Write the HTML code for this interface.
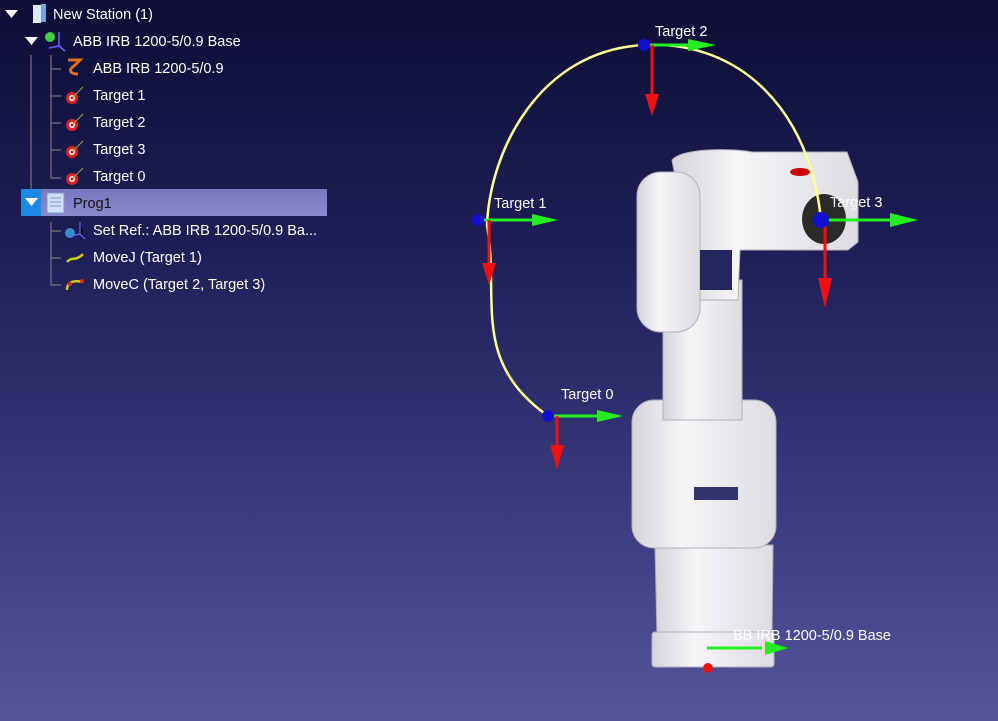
<!DOCTYPE html>
<html><head><style>
body{margin:0;width:998px;height:721px;overflow:hidden;background:linear-gradient(#0d0d35 0%,#1f1f58 35%,#3a3a7e 70%,#55559c 100%);font-family:"Liberation Sans",sans-serif;position:relative}
.r{position:absolute;color:#fff;font-size:14.5px;white-space:nowrap}
.sel{position:absolute;left:21px;top:189px;width:306px;height:27px;background:linear-gradient(#7878c0,#8a8ad0)}
.lbl{font-family:"Liberation Sans",sans-serif;font-size:14.5px;fill:#fff}
</style></head><body>
<div class="sel"></div>
<div style="position:absolute;left:21px;top:189px;width:20px;height:27px;background:#1e88e5"></div>
<svg width="340" height="300" style="position:absolute;left:0;top:0">
<g fill="#fff"><path d="M5 10h13l-6.5 8z"/><path d="M25 37h13l-6.5 8z"/><path d="M25 198h13l-6.5 8z"/></g>
<rect x="33" y="5" width="8" height="18" fill="#dfe8f5"/><rect x="41" y="4" width="5" height="18" fill="#6aa6e0"/>
<circle cx="50" cy="37" r="5" fill="#4c4"/><path d="M59 32v14M59 46l-10 2M59 46l6 5" stroke="#66f" stroke-width="1.5"/>
<g stroke="#888" fill="none"><path d="M31 55v134M51 55v123h10M51 69h10M51 96h10M51 123h10M51 150h10M51 222v63h10M51 231h10M51 258h10"/></g>
<path d="M68 60h12l-6 6c-6 4 -4 8 4 8" stroke="#e07020" stroke-width="3" fill="none"/>
<g>
<circle cx="72" cy="98" r="6" fill="#d22"/><circle cx="72" cy="98" r="3" fill="#fff"/><circle cx="72" cy="98" r="1.5" fill="#d22"/><path d="M73 97l10-10" stroke="#9a3"/>
<circle cx="72" cy="125" r="6" fill="#d22"/><circle cx="72" cy="125" r="3" fill="#fff"/><circle cx="72" cy="125" r="1.5" fill="#d22"/><path d="M73 124l10-10" stroke="#9a3"/>
<circle cx="72" cy="152" r="6" fill="#d22"/><circle cx="72" cy="152" r="3" fill="#fff"/><circle cx="72" cy="152" r="1.5" fill="#d22"/><path d="M73 151l10-10" stroke="#9a3"/>
<circle cx="72" cy="179" r="6" fill="#d22"/><circle cx="72" cy="179" r="3" fill="#fff"/><circle cx="72" cy="179" r="1.5" fill="#d22"/><path d="M73 178l10-10" stroke="#9a3"/>
</g>
<rect x="47" y="193" width="17" height="20" fill="#cfe0f5" stroke="#7a9cc8"/><path d="M50 198h11M50 202h11M50 206h11" stroke="#7a9cc8"/>
<circle cx="70" cy="233" r="5" fill="#3a8ad0"/><path d="M80 222v12l5 5M80 234l-10 2" stroke="#66f" stroke-width="1.3"/>
<path d="M67 262c5-6 8 0 16-8" stroke="#cc0" stroke-width="2.5" fill="none"/>
<path d="M67 290c0-8 6-10 16-8" stroke="#cc0" stroke-width="2.5" fill="none"/><circle cx="82" cy="281" r="2" fill="#d22"/><circle cx="70" cy="284" r="2" fill="#d22"/>
</svg>
<div class="r" style="left:53px;top:7px">New Station (1)</div>
<div class="r" style="left:73px;top:34px">ABB IRB 1200-5/0.9 Base</div>
<div class="r" style="left:93px;top:61px">ABB IRB 1200-5/0.9</div>
<div class="r" style="left:93px;top:88px">Target 1</div>
<div class="r" style="left:93px;top:115px">Target 2</div>
<div class="r" style="left:93px;top:142px">Target 3</div>
<div class="r" style="left:93px;top:169px">Target 0</div>
<div class="r" style="left:73px;top:196px;color:#111">Prog1</div>
<div class="r" style="left:93px;top:223px">Set Ref.: ABB IRB 1200-5/0.9 Ba...</div>
<div class="r" style="left:93px;top:250px">MoveJ (Target 1)</div>
<div class="r" style="left:93px;top:277px">MoveC (Target 2, Target 3)</div>
<svg width="998" height="721" style="position:absolute;left:0;top:0">
<defs>
<linearGradient id="g" x1="0" x2="1"><stop offset="0" stop-color="#d4d4da"/><stop offset=".35" stop-color="#f6f6f8"/><stop offset="1" stop-color="#dcdce2"/></linearGradient>
</defs>
<g fill="url(#g)" stroke="#b0b0ba" stroke-width="1">
<path d="M655 545h118l-1 92h-115z"/>
<rect x="652" y="632" width="122" height="35" rx="3"/>
<rect x="632" y="400" width="144" height="148" rx="22"/>
<rect x="663" y="280" width="79" height="140"/>
<path d="M672 160c10-12 60-12 80-8h95l11 30v60l-10 8h-108l-2 50h-40z"/>
<rect x="637" y="172" width="63" height="160" rx="24"/>
</g>
<rect x="700" y="250" width="32" height="40" fill="#252560"/>
<rect x="694" y="487" width="44" height="13" fill="#33336e"/>
<ellipse cx="824" cy="219" rx="22" ry="25" fill="#2a2a2a"/>
<ellipse cx="800" cy="172" rx="10" ry="4" fill="#c00"/>
<path d="M548 416C470 360 500 300 487 225C490 150 540 50 644 45C740 40 810 110 821 220" stroke="#ffff90" stroke-width="2.5" fill="none"/>
<g stroke-width="3">
<path d="M644 45h45M478 220h55M821 220h70M548 416h50M707 648h55" stroke="#2e2"/>
<path d="M652 45v50M489 220v45M825 220v60M557 416v30" stroke="#e11"/>
</g>
<g fill="#2e2"><path d="M688 39l28 6-28 6z"/><path d="M532 214l26 6-26 6z"/><path d="M890 213l28 7-28 7z"/><path d="M597 410l26 6-26 6z"/><path d="M765 641l23 7-23 7z"/></g>
<g fill="#e11"><path d="M645 94l7 22 7-22z"/><path d="M482 263l7 22 7-22z"/><path d="M818 278l7 30 7-30z"/><path d="M550 445l7 25 7-25z"/><circle cx="708" cy="668" r="5"/></g>
<g fill="#1010d0"><circle cx="644" cy="45" r="6"/><circle cx="478" cy="220" r="6"/><circle cx="821" cy="220" r="8"/><circle cx="548" cy="416" r="6"/></g>
<text class="lbl" x="655" y="36">Target 2</text>
<text class="lbl" x="494" y="208">Target 1</text>
<text class="lbl" x="830" y="207">Target 3</text>
<text class="lbl" x="561" y="399">Target 0</text>
<text class="lbl" x="733" y="640">BB IRB 1200-5/0.9 Base</text>
</svg>
</body></html>
